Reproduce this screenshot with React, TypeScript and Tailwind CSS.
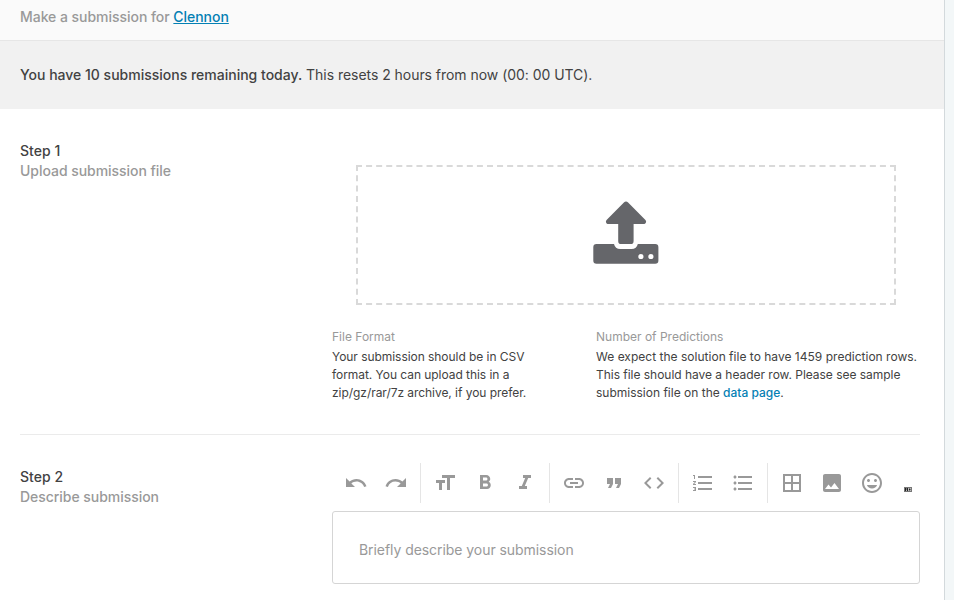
import type { ReactNode } from "react";
import {
  MdBorderAll,
  MdCode,
  MdFormatBold,
  MdFormatItalic,
  MdFormatListBulleted,
  MdFormatListNumbered,
  MdFormatQuote,
  MdFormatSize,
  MdImage,
  MdInsertEmoticon,
  MdInsertLink,
  MdRedo,
  MdUndo,
} from "react-icons/md";

const toolGroups: { label: string; icon: ReactNode }[][] = [
  [
    { label: "Undo", icon: <MdUndo size={24} /> },
    { label: "Redo", icon: <MdRedo size={24} /> },
  ],
  [
    { label: "Heading", icon: <MdFormatSize size={24} /> },
    { label: "Bold", icon: <MdFormatBold size={24} /> },
    { label: "Italic", icon: <MdFormatItalic size={24} /> },
  ],
  [
    { label: "Link", icon: <MdInsertLink size={24} /> },
    { label: "Quote", icon: <MdFormatQuote size={24} /> },
    { label: "Code", icon: <MdCode size={24} /> },
  ],
  [
    { label: "Numbered list", icon: <MdFormatListNumbered size={24} /> },
    { label: "Bulleted list", icon: <MdFormatListBulleted size={24} /> },
  ],
  [
    { label: "Table", icon: <MdBorderAll size={24} /> },
    { label: "Image", icon: <MdImage size={24} /> },
    { label: "Emoji", icon: <MdInsertEmoticon size={24} /> },
  ],
];

function UploadIcon() {
  return (
    <svg width="66" height="64" viewBox="0 0 66 64" fill="#65666a" aria-hidden="true">
      <path d="M30.9 2.500a3 3 0 0 1 4.200 0l17.100 17.200c1.900 1.900.6 4.300-1.700 4.300H40.600v16.900a3.200 3.200 0 0 1-3.200 3.200H28.400a3.200 3.200 0 0 1-3.200-3.200V24H15.500c-2.300 0-3.500-2.400-1.700-4.300z" />
      <path
        fillRule="evenodd"
        d="M3.500 44H21c.6 3 3 5 6.200 5H38.600c3.200 0 5.600-2 6.200-5H62.200a3.200 3.200 0 0 1 3.200 3.200V60.600a3.200 3.200 0 0 1-3.200 3.200H3.500A3.200 3.200 0 0 1 .3 60.600V47.200A3.200 3.200 0 0 1 3.500 44zM47.900 53.900a2.600 2.600 0 1 0 0 5.200 2.600 2.600 0 0 0 0-5.200zM57.900 53.900a2.600 2.600 0 1 0 0 5.200 2.600 2.600 0 0 0 0-5.200z"
      />
    </svg>
  );
}

function MarkdownIcon() {
  return (
    <svg width="8" height="5" viewBox="0 0 8 5" aria-hidden="true">
      <path fill="#777" d="M0 0h8v5H0z" />
      <path fill="#222" d="M1 1h1v3H1zM3 1h1v3H3zM5 2h1v1H5z" />
      <path fill="#bbb" d="M2 3h1v1H2zM4 1h1v3H4zM6 1h1v1H6zM6 3h1v1H6z" />
    </svg>
  );
}

function StepLabel({ title, text }: { title: string; text: string }) {
  return (
    <div className="w-[312px] shrink-0 text-sm font-medium leading-5">
      <h2 className="tracking-[0.05px] text-[#424242]">{title}</h2>
      <p className="tracking-[-0.04px] text-[#999]">{text}</p>
    </div>
  );
}

export default function App() {
  return (
    <div className="flex h-[600px] w-[954px] overflow-hidden bg-[#f3f7f8] font-['Inter',sans-serif] text-[#424242]">
      <main className="flex w-[945px] shrink-0 flex-col border-r border-[#d3d9dc] bg-white">
        <header className="flex h-[41px] shrink-0 items-start border-b border-[#e6e6e6] bg-[#fafafa] px-5 pt-[7px] text-sm font-medium leading-5 tracking-[-0.04px] text-[#999]">
          <p>
            Make a submission for{" "}
            <a href="#" className="text-[#0480b4] underline">
              Clennon
            </a>
          </p>
        </header>
        <div className="flex h-[68px] shrink-0 items-center bg-[#f1f1f1] px-5 text-sm leading-5 tracking-[-0.04px]">
          <p>
            <span className="font-medium tracking-normal">You have 10 submissions remaining today.</span> This resets 2
            hours from now (00: 00 UTC).
          </p>
        </div>
        <div className="pl-5 pr-6">
          <section className="flex h-[326px] border-b border-[#ebebeb] pt-8">
            <StepLabel title="Step 1" text="Upload submission file" />
            <div className="min-w-0 flex-1">
              <div className="mx-6 mt-6 flex h-[140px] justify-center border-2 border-dashed border-[#d9d9d9] pt-[33px]">
                <UploadIcon />
              </div>
              <div className="mt-[23px] flex text-xs leading-[18px]">
                <div className="w-[264px] shrink-0">
                  <h3 className="mb-0.5 text-[#999]">File Format</h3>
                  <p className="tracking-[-0.05px]">
                    Your submission should be in CSV
                    <br />
                    format. You can upload this in a
                    <br />
                    zip/gz/rar/7z archive, if you prefer.
                  </p>
                </div>
                <div className="whitespace-nowrap">
                  <h3 className="mb-0.5 text-[#999]">Number of Predictions</h3>
                  <p>
                    <span className="tracking-[0.015px]">
                      We expect the solution file to have 1459 prediction rows.
                    </span>
                    <br />
                    <span className="tracking-[-0.03px]">This file should have a header row. Please see sample</span>
                    <br />
                    submission file on the{" "}
                    <a href="#" className="font-medium text-[#0480b4]">
                      data page
                    </a>
                    .
                  </p>
                </div>
              </div>
            </div>
          </section>
          <section className="flex pt-7">
            <div className="pt-1">
              <StepLabel title="Step 2" text="Describe submission" />
            </div>
            <div className="min-w-0 flex-1">
              <div className="flex h-10 pl-1 text-[#999]">
                {toolGroups.map((group, index) => (
                  <div
                    key={index}
                    className={index === 0 ? "flex pr-1" : "flex border-l border-[#e5e5e5] px-1"}
                  >
                    {group.map((tool) => (
                      <button key={tool.label} aria-label={tool.label} className="flex size-10 items-center justify-center">
                        {tool.icon}
                      </button>
                    ))}
                  </div>
                ))}
                <button aria-label="Markdown" className="ml-2 flex h-10 items-start pt-6">
                  <MarkdownIcon />
                </button>
              </div>
              <div className="mt-2 flex h-[73px] items-center rounded-[3px] border border-[#d5d5d5] px-[26px] pt-1 text-sm leading-5 tracking-[-0.06px] text-[#999]">
                Briefly describe your submission
              </div>
            </div>
          </section>
        </div>
      </main>
    </div>
  );
}
